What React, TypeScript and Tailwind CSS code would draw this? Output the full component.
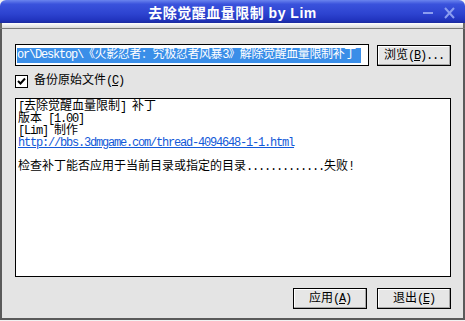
import type { ReactNode } from "react"

const mono = "font-['Liberation_Mono','Noto_Sans_CJK_SC',monospace]"

// ASCII runs are squeezed to the 6px cell of the old bitmap font
function A({ children }: { children: ReactNode }) {
  return <span className="tracking-[-1.2px]">{children}</span>
}

function Key({ k }: { k: string }) {
  return (
    <A>
      (<u className="underline-offset-1">{k}</u>)
    </A>
  )
}

function XpButton({ children, className = "" }: { children: ReactNode; className?: string }) {
  return (
    <div
      className={`flex h-[21px] w-[74px] items-center justify-center border border-black bg-[#e6e6e6] text-[12px] leading-[12px] text-black shadow-[inset_-1px_-1px_0_#a8a8a8,inset_1px_1px_0_#ffffff] ${className}`}
    >
      {children}
    </div>
  )
}

export default function App() {
  return (
    <div className={`flex h-[321px] w-[465px] flex-col overflow-hidden bg-[#f2f2f2] ${mono}`}>
      {/* TITLE BAR */}
      <div className="grid h-[23px] grid-cols-[1fr_auto_1fr] items-center rounded-t-[6px] bg-[linear-gradient(180deg,#6a84ee_0%,#3a52dc_18%,#2d43d0_60%,#2235c0_85%,#1a2a9e_100%)]">
        <div />
        <div className="pt-[3px] font-['Liberation_Sans','Noto_Sans_CJK_SC',sans-serif] text-[14px] font-bold leading-[14px] tracking-[0.5px] text-white">
          去除觉醒血量限制 by Lim
        </div>
        <div className="flex items-center justify-end gap-[9px] pr-[9px] pt-[2px]">
          <svg width="12" height="12" viewBox="0 0 12 12">
            <rect x="1" y="5" width="10" height="2" fill="#8b9df0" />
          </svg>
          <svg width="13" height="14" viewBox="0 0 13 14">
            <path d="M2 2 L11 12 M11 2 L2 12" stroke="#8b9df0" strokeWidth="2" />
          </svg>
        </div>
      </div>

      {/* TITLE SHADOW BAND */}
      <div className="h-[5px] border-x-2 border-x-[#6a6a6a] bg-[linear-gradient(180deg,#ffffff,#d6d6d6)]" />
      <div className="h-px bg-[#7a7a7a]" />

      {/* BODY */}
      <div className="flex flex-1 flex-col border-x-2 border-b-2 border-[#5a5a5a] bg-[#e4e4e4] pl-[13px] pr-[12px] pt-[15px] text-[12px] leading-[12px] text-black">
        <div className="flex items-start gap-[8px]">
          <div className="flex h-[22px] w-[354px] items-center overflow-hidden whitespace-nowrap border border-black bg-white pl-px">
            <span className="bg-[#3a8ee8] pr-[5px] leading-[15px] tracking-[-0.4px] text-white">
              <A>{"or\\Desktop\\"}</A>《火影忍者：究极忍者风暴<A>3</A>》解除觉醒血量限制补丁
            </span>
          </div>
          <XpButton className="mt-px">
            浏览<Key k="B" />
            <A>...</A>
          </XpButton>
        </div>

        <div className="mt-[8px] flex h-[14px] items-center gap-[6px]">
          <div className="flex h-[13px] w-[13px] items-center justify-center border border-black bg-white">
            <svg width="9" height="9" viewBox="0 0 9 9">
              <path d="M1 4 L3.5 6.5 L8 1.5" stroke="#000" strokeWidth="2" fill="none" />
            </svg>
          </div>
          <span>
            备份原始文件<Key k="C" />
          </span>
        </div>

        <div className="mt-[10px] h-[179px] border border-black bg-white px-[2px] pt-[2px]">
          <div>
            <A>[</A>去除觉醒血量限制<A>] </A>补丁
          </div>
          <div>
            版本<A> [1.00]</A>
          </div>
          <div>
            <A>[Lim] </A>制作
          </div>
          <div className="text-[#1259d8] underline underline-offset-1">
            <A>http://bbs.3dmgame.com/thread-4094648-1-1.html</A>
          </div>
          <div className="h-[12px]" />
          <div>
            检查补丁能否应用于当前目录或指定的目录<A>.............</A>失败<A>!</A>
          </div>
        </div>

        <div className="mt-[11px] flex justify-end gap-[10px]">
          <XpButton>
            应用<Key k="A" />
          </XpButton>
          <XpButton>
            退出<Key k="E" />
          </XpButton>
        </div>
      </div>
      <div className="h-px" />
    </div>
  )
}
